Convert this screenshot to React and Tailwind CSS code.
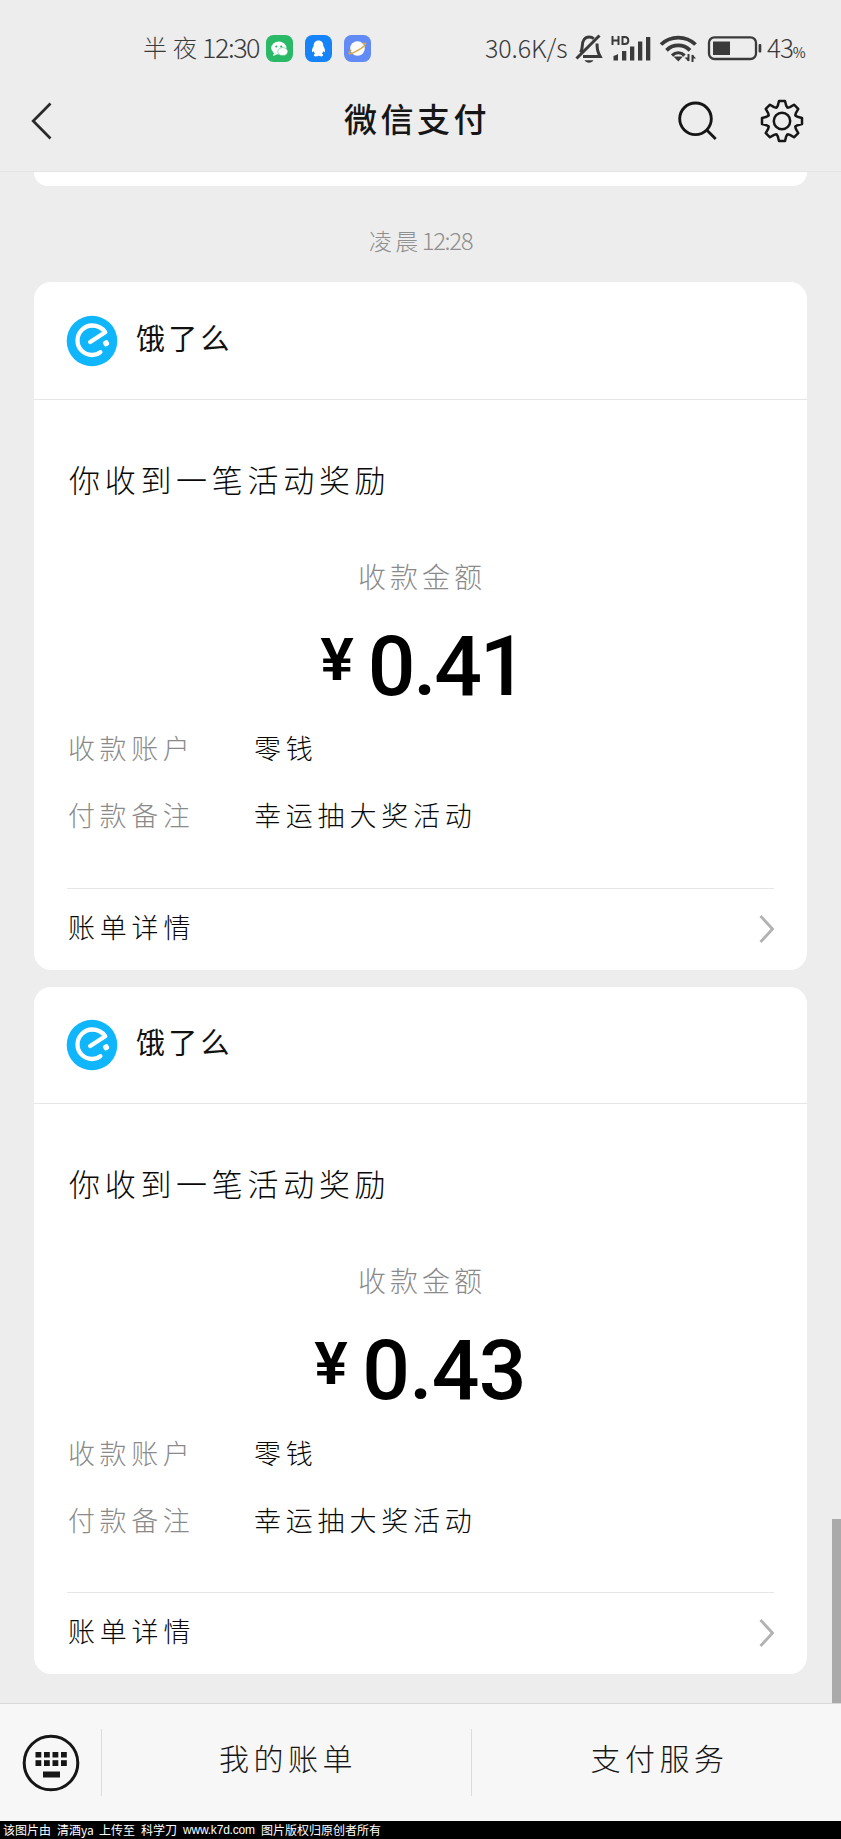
import React from "react";

const toothPath = (() => {
  const tooth = [[-5.4, -13.4], [-4.2, -15.4], [-3, -20], [3, -20], [4.2, -15.4], [5.4, -13.4]];
  const points = [];
  for (let i = 0; i < 8; i++) {
    const a = (i * Math.PI) / 4;
    tooth.forEach(([x, y]) => {
      points.push(
        (x * Math.cos(a) - y * Math.sin(a)).toFixed(2) + " " + (x * Math.sin(a) + y * Math.cos(a)).toFixed(2)
      );
    });
  }
  return "M" + points.join("L") + "Z";
})();

function StatusBar() {
  return (
    <div className="flex h-[80px] items-start pt-[33px] text-[#3a3a3a]">
      <div className="ml-[143px] flex h-[28px] w-[121px] shrink-0 items-center whitespace-nowrap font-light">
        <span className="w-[59px] text-[24px] leading-[28px] tracking-[6px]">半夜</span>
        <span className="text-[27px] leading-[28px] tracking-[-1.5px]">12:30</span>
      </div>
      <div className="ml-[2px] mt-[2px] flex gap-[12px]">
        <svg width="27" height="27" viewBox="0 0 27 27">
          <rect width="27" height="27" rx="7.5" fill="#2aba67" />
          <ellipse cx="12.8" cy="13" rx="7.6" ry="6.5" fill="#fff" />
          <path d="M8 18l-1 3 4-1.5z" fill="#fff" />
          <ellipse cx="16.8" cy="16.6" rx="5" ry="4" fill="#fff" stroke="#2aba67" strokeWidth=".5" />
          <circle cx="10.3" cy="11.5" r="1.1" fill="#2aba67" />
          <circle cx="15.2" cy="11.5" r="1.1" fill="#2aba67" />
        </svg>
        <svg width="27" height="27" viewBox="0 0 27 27">
          <rect width="27" height="27" rx="7.5" fill="#1684f8" />
          <path d="M13.5 5.4c-3.4 0-4.8 2.4-4.8 5.5-1.2 2-2.2 4.2-1.5 6.2.5.3 1.1-.4 1.5-1 .2 1.2.7 2 1.4 2.7-2 .8-1.5 2.6.6 2.6 1.3 0 2.3-.3 2.8-.9.5.6 1.5.9 2.8.9 2.1 0 2.6-1.8.6-2.6.7-.7 1.2-1.5 1.4-2.7.4.6 1 1.3 1.5 1 .7-2-.3-4.2-1.5-6.2 0-3.1-1.4-5.5-4.8-5.5z" fill="#fff" />
        </svg>
        <svg width="27" height="27" viewBox="0 0 27 27">
          <rect width="27" height="27" rx="7.5" fill="#628bf5" />
          <circle cx="13.5" cy="13.5" r="7.3" fill="#fff" />
          <path d="M7.3 14.8c-2.4 2.6-3 4.3-1.3 4.1 3.5-.5 14.3-6.8 15.5-9.7.4-1.3-1-1.2-2.9-.5" fill="none" stroke="#dfa93c" strokeWidth="1.4" />
        </svg>
      </div>
      <span className="ml-[114px] w-[90px] whitespace-nowrap text-[25px] font-light leading-[28px] tracking-[-0.1px]">30.6K/s</span>
      <svg className="mt-px" width="29" height="30" viewBox="575 34 29 30" fill="none" stroke="#3a3a3a" strokeWidth="3">
        <path d="M576.5 58.5L599.5 35.5" />
        <path d="M580.5 52.5c1.5-2 1.7-3.5 1.7-6 0-5.5 2.6-9.5 7-9.5 1.8 0 3.3.6 4.5 1.8M597 43.5c.2 6.5.6 8 3.2 13H583" />
        <path d="M584.5 60.2h9c-1.5 3.3-7.5 3.3-9 0z" fill="#3a3a3a" stroke="none" />
      </svg>
      <svg className="ml-[6px]" width="42" height="30" viewBox="610 33 42 30" fill="#3a3a3a">
        <path d="M612.5 36v9M618.5 36v9M612.5 40.4h6M622.5 37v7h2.2c4.8 0 4.8-7 0-7z" fill="none" stroke="#3a3a3a" strokeWidth="2" />
        <path d="M613.5 56q3-1 4.5-2v6.5h-4.5zM622 51h4.3v9.5H622zM630 46.5h4.3v14H630zM638 41.5h4.3v19H638zM646 37h4.3v23.5H646z" />
      </svg>
      <svg className="ml-[7px]" width="38" height="30" viewBox="659 33 38 30" fill="none" stroke="#3a3a3a" strokeWidth="3.8">
        <path d="M661 44.5c9.5-9.3 25-9.3 34.5 0" />
        <path d="M666.5 50.3c6.5-6.5 17-6.5 23.5 0" />
        <path d="M672 55.5c3.8-3.5 8.8-3.5 12.6 0" strokeWidth="3.2" />
        <path d="M673.5 56.5h9.5l-4.7 5z" fill="#3a3a3a" stroke="none" />
        <path d="M688.5 54v7M692.5 62v-7" strokeWidth="2" />
        <path d="M688.5 61.5l-4-4h4zM692.5 54.5l3.5 4h-3.5z" fill="#3a3a3a" stroke="none" />
      </svg>
      <svg className="ml-[10px] mt-[2px]" width="56" height="26" viewBox="707 35 56 26">
        <rect x="709" y="37.3" width="47" height="21.7" rx="5.5" fill="none" stroke="#3a3a3a" strokeWidth="2.3" />
        <rect x="713" y="41.5" width="17" height="13.5" fill="#3a3a3a" />
        <rect x="758.6" y="44" width="2.7" height="8.5" rx="1" fill="#3a3a3a" />
      </svg>
      <div className="ml-[4px] flex h-[28px] items-baseline whitespace-nowrap font-light leading-[28px]">
        <span className="text-[26px] tracking-[-1px]">43</span>
        <span className="text-[14px] font-normal tracking-[-1px]">%</span>
      </div>
    </div>
  );
}

function NavBar() {
  return (
    <div className="flex h-[92px] items-start border-b border-[#e4e4e4]">
      <svg className="ml-[30px] mt-[21px]" width="24" height="40" viewBox="30 101 24 40" fill="none" stroke="#2a2a2a" strokeWidth="2.7">
        <path d="M50.5 103.5L33.2 121l17.3 17.5" />
      </svg>
      <h1 className="ml-[290px] mt-[18px] w-[160px] whitespace-nowrap text-[33px] font-medium leading-[40px] tracking-[3.5px] text-[#161616]">微信支付</h1>
      <svg className="ml-[172px] mt-[20px]" width="42" height="42" viewBox="676 100 42 42" fill="none" stroke="#161616" strokeWidth="2.9">
        <circle cx="695.5" cy="118.8" r="15.8" />
        <path d="M706.5 129.8l9.2 9.2" />
      </svg>
      <svg className="ml-[42px] mt-[19px]" width="44" height="44" viewBox="-22 -22 44 44" fill="none" stroke="#161616" strokeWidth="2.5" strokeLinejoin="round">
        <path d={toothPath} />
        <circle r="8.2" />
      </svg>
    </div>
  );
}

function BrandLogo() {
  return (
    <svg className="shrink-0" width="52" height="52" viewBox="-26 -26 52 52">
      <circle r="25.3" fill="#10b6fb" />
      <path d="M-1.8 1L13.2-8.8C9.5-14 5-15.5 0-15.5-8-15.5-14.5-8.5-14.5-.5c0 8.2 6.5 14.5 14.5 14.5 3.2 0 6-.8 8.4-2.8" fill="none" stroke="#fff" strokeWidth="4.3" strokeLinejoin="round" strokeLinecap="round" />
      <rect x="11.3" y="-.5" width="5.6" height="5.6" rx="1.8" transform="rotate(-30 14 2.3)" fill="#fff" />
    </svg>
  );
}

function Row({ label, value }) {
  return (
    <div className="flex h-[67px] items-center whitespace-nowrap text-[27px] font-light leading-[36px] tracking-[4.6px]">
      <span className="w-[186px] shrink-0 text-[#8a8a8a]">{label}</span>
      <span className="tracking-[4.8px] text-[#080808]">{value}</span>
    </div>
  );
}

function Amount({ value }) {
  // Amounts that end in the narrow figure "1" are set slightly tighter.
  const tight = value.endsWith("1");
  return (
    <div className={`mt-[30px] flex h-[91px] items-start justify-center font-['Roboto',sans-serif] text-black ${tight ? "pl-[5px]" : ""}`}>
      <span className="mt-px scale-x-[1.05] text-[60px] font-semibold leading-[70px]">¥</span>
      <span className={`ml-[15px] text-[84px] font-medium leading-[86px] ${tight ? "tracking-[-2.2px]" : "tracking-[-0.8px]"}`}>{value}</span>
    </div>
  );
}

function PaymentCard({ amount }) {
  return (
    <section className="h-[687.4px] shrink-0 rounded-[17px] bg-white">
      <header className="flex h-[117.5px] items-center border-b border-[#e6e6e6] pl-[32px]">
        <BrandLogo />
        <span className="-mt-[8px] ml-[18px] whitespace-nowrap text-[29px] leading-[40px] tracking-[3.2px] text-[#111]">饿了么</span>
      </header>
      <div className="px-[34px]">
        <h2 className="whitespace-nowrap pl-px pt-[59px] text-[31px] font-light leading-[40px] tracking-[4.7px] text-[#080808]">你收到一笔活动奖励</h2>
        <p className="mt-[59px] pl-[3px] text-center text-[28px] font-light leading-[36px] tracking-[4px] text-[#8a8a8a]">收款金额</p>
        <Amount value={amount} />
        <Row label="收款账户" value="零钱" />
        <Row label="付款备注" value="幸运抽大奖活动" />
      </div>
      <footer className="mx-[33px] mt-[39px] flex h-[80px] items-center justify-between border-t border-[#e6e6e6]">
        <span className="-mt-[3px] whitespace-nowrap pl-px text-[27px] font-light leading-[36px] tracking-[4.8px] text-[#080808]">账单详情</span>
        <svg className="mt-px" width="15" height="30" viewBox="0 0 15 30" fill="none" stroke="#b2b2b2" strokeWidth="2.8">
          <path d="M1.5 2L13.5 15 1.5 28" />
        </svg>
      </footer>
    </section>
  );
}

function KeyboardIcon() {
  return (
    <svg width="58" height="58" viewBox="-29 -29 58 58" fill="#161616">
      <circle r="26.8" fill="none" stroke="#161616" strokeWidth="3" />
      {[-15.5, -7, 1.5, 10].map((x) => (
        <React.Fragment key={x}>
          <rect x={x} y="-11" width="5.8" height="5.5" />
          <rect x={x} y="-2.8" width="5.8" height="5.8" />
        </React.Fragment>
      ))}
      <rect x="-8" y="8.5" width="17" height="6" />
    </svg>
  );
}

function BottomBar() {
  return (
    <div className="flex h-[118px] shrink-0 items-start border-t border-[#d8d8d8] bg-[#f7f7f7] text-[30px] font-light leading-[40px] tracking-[4.5px] text-[#161616]">
      <div className="flex h-[118px] w-[101px] items-center pl-[22px]"><KeyboardIcon /></div>
      <div className="mt-[25px] flex h-[67px] w-[370px] items-center justify-center border-l border-[#dcdcdc] pb-[11px] pl-[3px]">我的账单</div>
      <div className="mt-[25px] flex h-[67px] w-[370px] items-center justify-center border-l border-[#dcdcdc] pb-[11px] pl-[6px]">支付服务</div>
    </div>
  );
}

export default function App() {
  return (
    <div className="flex h-[1839px] w-[841px] flex-col overflow-hidden bg-[#ededed] font-['Noto_Sans_CJK_SC',sans-serif]">
      <StatusBar />
      <NavBar />
      <main className="relative flex h-[1531px] shrink-0 flex-col px-[34px]">
        <div className="h-[14px] shrink-0 rounded-b-[17px] bg-white" />
        <p className="mt-[39px] flex h-[30px] items-center justify-center whitespace-nowrap text-[23px] font-light leading-[30px] text-[#8f8f8f]">
          <span className="tracking-[3.4px]">凌晨</span>
          <span className="text-[24px] tracking-[-1.4px]">12:28</span>
        </p>
        <div className="mt-[27.3px] flex flex-col gap-[17px]">
          <PaymentCard amount="0.41" />
          <PaymentCard amount="0.43" />
        </div>
        <div className="absolute bottom-0 right-0 h-[184px] w-[9px] bg-[#aaa]" />
      </main>
      <BottomBar />
      <div className="flex h-[18px] shrink-0 items-center whitespace-nowrap bg-black pl-[3px] text-[12px] leading-[18px] text-white">
        <span className="w-[54px]">该图片由</span>
        <span className="w-[42px]">清酒ya</span>
        <span className="w-[42px]">上传至</span>
        <span className="w-[42px]">科学刀</span>
        <span className="w-[78px] font-['Liberation_Sans',sans-serif] tracking-[-0.2px]">www.k7d.com</span>
        <span>图片版权归原创者所有</span>
      </div>
    </div>
  );
}
